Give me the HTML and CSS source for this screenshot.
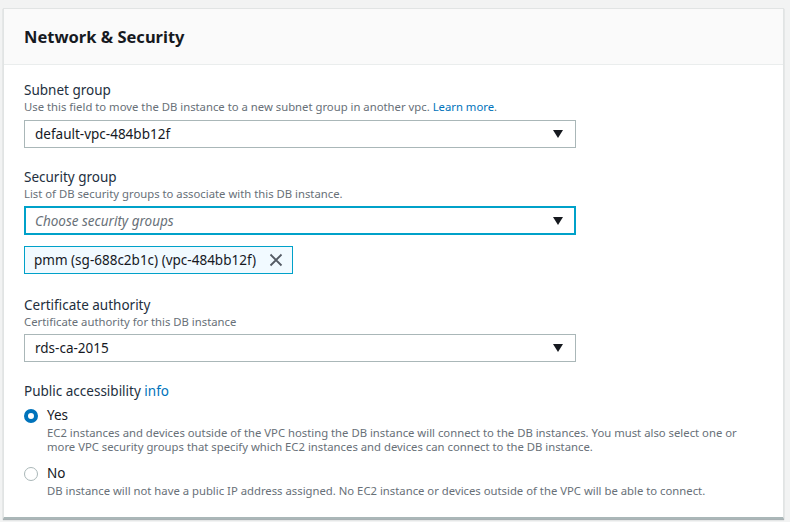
FILE: index.html
```html
<!DOCTYPE html>
<html>
<head>
<meta charset="utf-8">
<link rel="stylesheet" href="styles.css">
</head>
<body>
<div class="card">
  <div class="card-header"><h2>Network &amp; Security</h2></div>
  <div class="card-body">
    <div class="field">
      <div class="label">Subnet group</div>
      <div class="help">Use this field to move the DB instance to a new subnet group in another vpc. <a class="link">Learn more</a>.</div>
      <div class="select"><span>default-vpc-484bb12f</span><span class="caret"></span></div>
    </div>
    <div class="field tokens">
      <div class="label">Security group</div>
      <div class="help">List of DB security groups to associate with this DB instance.</div>
      <div class="select focus"><span class="placeholder">Choose security groups</span><span class="caret"></span></div>
      <div class="token"><span>pmm (sg-688c2b1c) (vpc-484bb12f)</span>
        <svg class="x" width="14" height="14" viewBox="0 0 14 14"><path d="M1.5 1.5L12.5 12.5M12.5 1.5L1.5 12.5" stroke="#545b64" stroke-width="1.8" fill="none"/></svg>
      </div>
    </div>
    <div class="field">
      <div class="label">Certificate authority</div>
      <div class="help">Certificate authority for this DB instance</div>
      <div class="select tight"><span>rds-ca-2015</span><span class="caret"></span></div>
    </div>
    <div class="field last">
      <div class="label">Public accessibility <a class="link">info</a></div>
      <div class="radio-row">
        <span class="radio checked"></span>
        <div class="radio-text">
          <div class="radio-label">Yes</div>
          <div class="help">EC2 instances and devices outside of the VPC hosting the DB instance will connect to the DB instances. You must also select one or more VPC security groups that specify which EC2 instances and devices can connect to the DB instance.</div>
        </div>
      </div>
      <div class="radio-row">
        <span class="radio"></span>
        <div class="radio-text">
          <div class="radio-label">No</div>
          <div class="help">DB instance will not have a public IP address assigned. No EC2 instance or devices outside of the VPC will be able to connect.</div>
        </div>
      </div>
    </div>
  </div>
</div>
</body>
</html>
```

FILE: styles.css
```css
html, body {
  margin: 0;
  padding: 0;
  background: #f2f3f3;
}
body {
  font-family: "Noto Sans", "Liberation Sans", sans-serif;
  color: #16191f;
  padding: 8px 4px 5px 3px;
}
.card {
  background: #fff;
  border: 1px solid #e1e4e4;
  border-bottom: 2px solid #aab7b8;
  box-shadow: 0 1px 1px rgba(0,28,36,0.3);
  width: 781px;
  box-sizing: border-box;
}
.card-header {
  background: #fafafa;
  border-bottom: 1px solid #eaeded;
  height: 56px;
  box-sizing: border-box;
  padding: 0 20px;
  display: flex;
  align-items: center;
}
.card-header h2 {
  margin: 0;
  font-size: 16.5px;
  font-weight: 700;
  color: #16191f;
}
.card-body {
  padding: 15px 20px 19px 20px;
}
.field {
  margin-bottom: 19px;
}
.field.tokens {
  margin-bottom: 21px;
}
.field.last {
  margin-bottom: 0;
}
.label {
  font-size: 13.5px;
  line-height: 20px;
  color: #232f3e;
}
.help {
  font-size: 11.3px;
  line-height: 14px;
  color: #687078;
}
.link {
  color: #0073bb;
}
.select {
  margin-top: 6px;
  width: 552px;
  height: 28px;
  box-sizing: border-box;
  border: 1px solid #aab7b8;
  display: flex;
  align-items: center;
  justify-content: space-between;
  padding: 0 12px 0 10px;
  font-size: 13.5px;
  color: #16191f;
}
.select.tight {
  margin-top: 5px;
}
.select.focus {
  margin-top: 5px;
  border: 2px solid #00a1c9;
  height: 29px;
  padding-left: 9px;
  padding-right: 11px;
}
.placeholder {
  color: #687078;
  font-style: italic;
}
.caret {
  width: 0;
  height: 0;
  border-left: 5px solid transparent;
  border-right: 5px solid transparent;
  border-top: 8px solid #16191f;
}
.token {
  margin-top: 11px;
  display: inline-flex;
  align-items: center;
  gap: 13px;
  height: 28px;
  box-sizing: border-box;
  border: 1px solid #00a1c9;
  background: #f1faff;
  padding: 0 9px 0 9px;
  font-size: 13.5px;
  color: #16191f;
}
.radio-row {
  display: flex;
  align-items: flex-start;
  margin-top: 4px;
}
.radio-row + .radio-row {
  margin-top: 9px;
}
.radio {
  flex: none;
  width: 14px;
  height: 14px;
  border-radius: 50%;
  border: 1px solid #aab7b8;
  box-sizing: border-box;
  margin-top: 4px;
  margin-right: 9px;
}
.radio.checked {
  border: 4px solid #0073bb;
}
.radio-label {
  font-size: 13.5px;
  line-height: 20px;
  color: #16191f;
}
.radio-text .help {
  margin-top: 1px;
}
```
